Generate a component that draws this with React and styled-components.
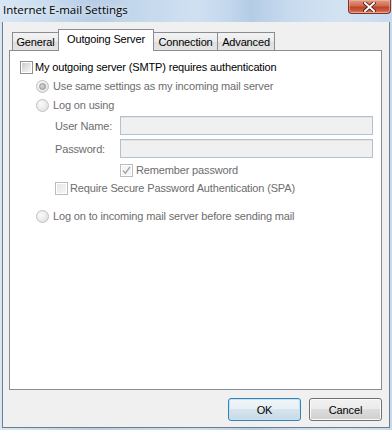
import React from 'react';
import styled, { createGlobalStyle, css } from 'styled-components';

const Global = createGlobalStyle`
  html, body { margin: 0; padding: 0; }
  body {
    width: 392px;
    height: 430px;
    overflow: hidden;
    font-family: "Liberation Sans", Arial, sans-serif;
    font-size: 11px;
    letter-spacing: -0.15px;
  }
`;

const Window = styled.div`
  width: 392px;
  height: 430px;
  box-sizing: border-box;
  display: flex;
  flex-direction: column;
  padding: 0 2px 2px 2px;
  background:
    linear-gradient(90deg,
      #d9e7f5 0%, #c9dcef 12%, #b7cde6 24%, #c3d7ec 34%, #cfe0f1 50%,
      #c4d8ed 58%, #b5cce6 64%, #c8dbee 74%, #d3e3f2 88%, #c7daee 100%);
`;

const TitleBar = styled.div`
  height: 22px;
  display: flex;
  align-items: flex-start;
  justify-content: space-between;
`;

const Title = styled.div`
  font-family: "Open Sans", "Noto Sans", sans-serif;
  font-size: 11.5px;
  letter-spacing: 0;
  line-height: 14px;
  color: #000;
  padding: 3px 0 0 1px;
  text-shadow: 0 0 6px rgba(255, 255, 255, 0.9);
`;

const CloseButton = styled.div`
  width: 43px;
  height: 14px;
  margin-right: -1px;
  box-sizing: border-box;
  border: 1px solid #7a3428;
  border-top: none;
  border-radius: 0 0 4px 4px;
  background: linear-gradient(180deg, #e09a86 0%, #d06a50 45%, #bf4429 55%, #cc5e44 85%, #e0947a 100%);
  box-shadow: inset 0 0 0 1px rgba(255, 200, 180, 0.45);
  display: flex;
  align-items: center;
  justify-content: center;
`;

const Client = styled.div`
  flex: 1;
  display: flex;
  flex-direction: column;
  background: #f0f0f0;
  border: 1px solid #6f7c8a;
  border-top: none;
  padding: 7px 7px 6px 6px;
`;

const TabRow = styled.div`
  height: 21px;
  display: flex;
  align-items: flex-end;
  padding-left: 3px;
`;

const Tab = styled.div`
  box-sizing: border-box;
  width: ${p => p.$w}px;
  margin-left: ${p => (p.$first ? 0 : -1)}px;
  border: 1px solid #898c95;
  border-bottom: none;
  text-align: center;
  color: #000;
  white-space: nowrap;
  ${p => p.$active
    ? css`
      height: 22px;
      margin-bottom: -1px;
      position: relative;
      z-index: 1;
      background: #fff;
      line-height: 17px;
      padding-top: 1px;
    `
    : css`
      height: 18px;
      background: linear-gradient(180deg, #f3f3f3 0%, #ebebeb 50%, #dedede 51%, #e4e4e4 100%);
      line-height: 19px;
    `}
`;

const Panel = styled.div`
  height: 340px;
  box-sizing: border-box;
  border: 1px solid #898c95;
  background: #fff;
  display: flex;
  flex-direction: column;
`;

const Row = styled.div`
  display: flex;
  align-items: center;
  height: 13px;
  margin-top: ${p => p.$top}px;
  padding-left: ${p => p.$indent}px;
`;

const Label = styled.span`
  color: ${p => (p.$disabled ? '#6d6d6d' : '#000')};
  margin-left: ${p => p.$gap}px;
  white-space: nowrap;
  line-height: 13px;
`;

const Box = styled.span`
  width: 13px;
  height: 13px;
  box-sizing: border-box;
  flex: none;
  display: flex;
  align-items: center;
  justify-content: center;
  border: 1px solid ${p => (p.$disabled ? '#bcbcbc' : '#8e8f8f')};
  background: ${p => (p.$disabled ? '#f4f4f4' : '#fff')};
  box-shadow: inset 0 0 0 1px #fff;
  &::before {
    content: '';
    display: ${p => (p.$checked ? 'none' : 'block')};
    width: 9px;
    height: 9px;
    background: ${p => (p.$disabled
      ? 'linear-gradient(135deg, #e6e6e6 0%, #f6f6f6 100%)'
      : 'linear-gradient(135deg, #cbcbcb 0%, #ececec 70%, #f4f4f4 100%)')};
  }
`;

const Radio = styled.span`
  width: 13px;
  height: 13px;
  box-sizing: border-box;
  flex: none;
  border-radius: 50%;
  border: 1px solid #c0c0c0;
  background: radial-gradient(circle at 35% 35%, #fbfbfb 0%, #e8e8e8 60%, #dcdcdc 100%);
  display: flex;
  align-items: center;
  justify-content: center;
  &::before {
    content: '';
    display: ${p => (p.$checked ? 'block' : 'none')};
    width: 5px;
    height: 5px;
    border-radius: 50%;
    border: 1px solid #9a9a9a;
    background: radial-gradient(circle at 40% 40%, #d8d8d8 0%, #a8a8a8 100%);
  }
`;

const FieldRow = styled.div`
  display: grid;
  grid-template-columns: 65px 253px;
  align-items: center;
  height: 19px;
  margin-top: ${p => p.$top}px;
  padding-left: 45px;
`;

const FieldLabel = styled.span`
  color: #6d6d6d;
  white-space: nowrap;
`;

const Input = styled.div`
  height: 19px;
  box-sizing: border-box;
  border: 1px solid #b3c0d1;
  background: #f0f0f0;
  box-shadow: inset 0 1px 0 #e3e3e3;
`;

const ButtonRow = styled.div`
  display: flex;
  justify-content: flex-end;
  gap: 8px;
  margin-top: 8px;
`;

const Button = styled.div`
  width: 73px;
  height: 23px;
  box-sizing: border-box;
  border-radius: 3px;
  display: flex;
  align-items: center;
  justify-content: center;
  color: #000;
  border: 1px solid ${p => (p.$default ? '#3c7fb1' : '#707070')};
  box-shadow: inset 0 0 0 1px ${p => (p.$default ? '#bde4f9' : '#fbfbfb')};
  background: ${p => (p.$default
    ? 'linear-gradient(180deg, #f0f6fa 0%, #e8f0f5 48%, #d6e4ed 50%, #c8dae6 100%)'
    : 'linear-gradient(180deg, #f2f2f2 0%, #ebebeb 48%, #dddddd 50%, #cfcfcf 100%)')};
`;

const Check = () => (
  <svg width="9" height="9" viewBox="0 0 9 9">
    <path d="M1 4.6 L3.4 7.2 L8 0.8" fill="none" stroke="#a3a3a3" strokeWidth="1.4" />
  </svg>
);

const CloseX = () => (
  <svg width="13" height="10" viewBox="0 0 13 10">
    <path d="M2 1 L11 9 M11 1 L2 9" stroke="#4a1a12" strokeWidth="3.6" strokeLinecap="square" />
    <path d="M2 1 L11 9 M11 1 L2 9" stroke="#ffffff" strokeWidth="2" strokeLinecap="square" />
  </svg>
);

export default function App() {
  return (
    <>
      <Global />
      <Window>
        <TitleBar>
          <Title>Internet E-mail Settings</Title>
          <CloseButton><CloseX /></CloseButton>
        </TitleBar>
        <Client>
          <TabRow>
            <Tab $first $w={47}>General</Tab>
            <Tab $active $w={96}>Outgoing Server</Tab>
            <Tab $w={65}>Connection</Tab>
            <Tab $w={58}>Advanced</Tab>
          </TabRow>
          <Panel>
            <Row $top={10} $indent={10}>
              <Box />
              <Label $gap={2}>My outgoing server (SMTP) requires authentication</Label>
            </Row>
            <Row $top={6} $indent={26}>
              <Radio $checked />
              <Label $disabled $gap={4}>Use same settings as my incoming mail server</Label>
            </Row>
            <Row $top={6} $indent={26}>
              <Radio />
              <Label $disabled $gap={4}>Log on using</Label>
            </Row>
            <FieldRow $top={4}>
              <FieldLabel>User Name:</FieldLabel>
              <Input />
            </FieldRow>
            <FieldRow $top={4}>
              <FieldLabel>Password:</FieldLabel>
              <Input />
            </FieldRow>
            <Row $top={6} $indent={110}>
              <Box $disabled $checked><Check /></Box>
              <Label $disabled $gap={3}>Remember password</Label>
            </Row>
            <Row $top={5} $indent={45}>
              <Box $disabled />
              <Label $disabled $gap={2}>Require Secure Password Authentication (SPA)</Label>
            </Row>
            <Row $top={15} $indent={26}>
              <Radio />
              <Label $disabled $gap={4}>Log on to incoming mail server before sending mail</Label>
            </Row>
          </Panel>
          <ButtonRow>
            <Button $default>OK</Button>
            <Button>Cancel</Button>
          </ButtonRow>
        </Client>
      </Window>
    </>
  );
}
